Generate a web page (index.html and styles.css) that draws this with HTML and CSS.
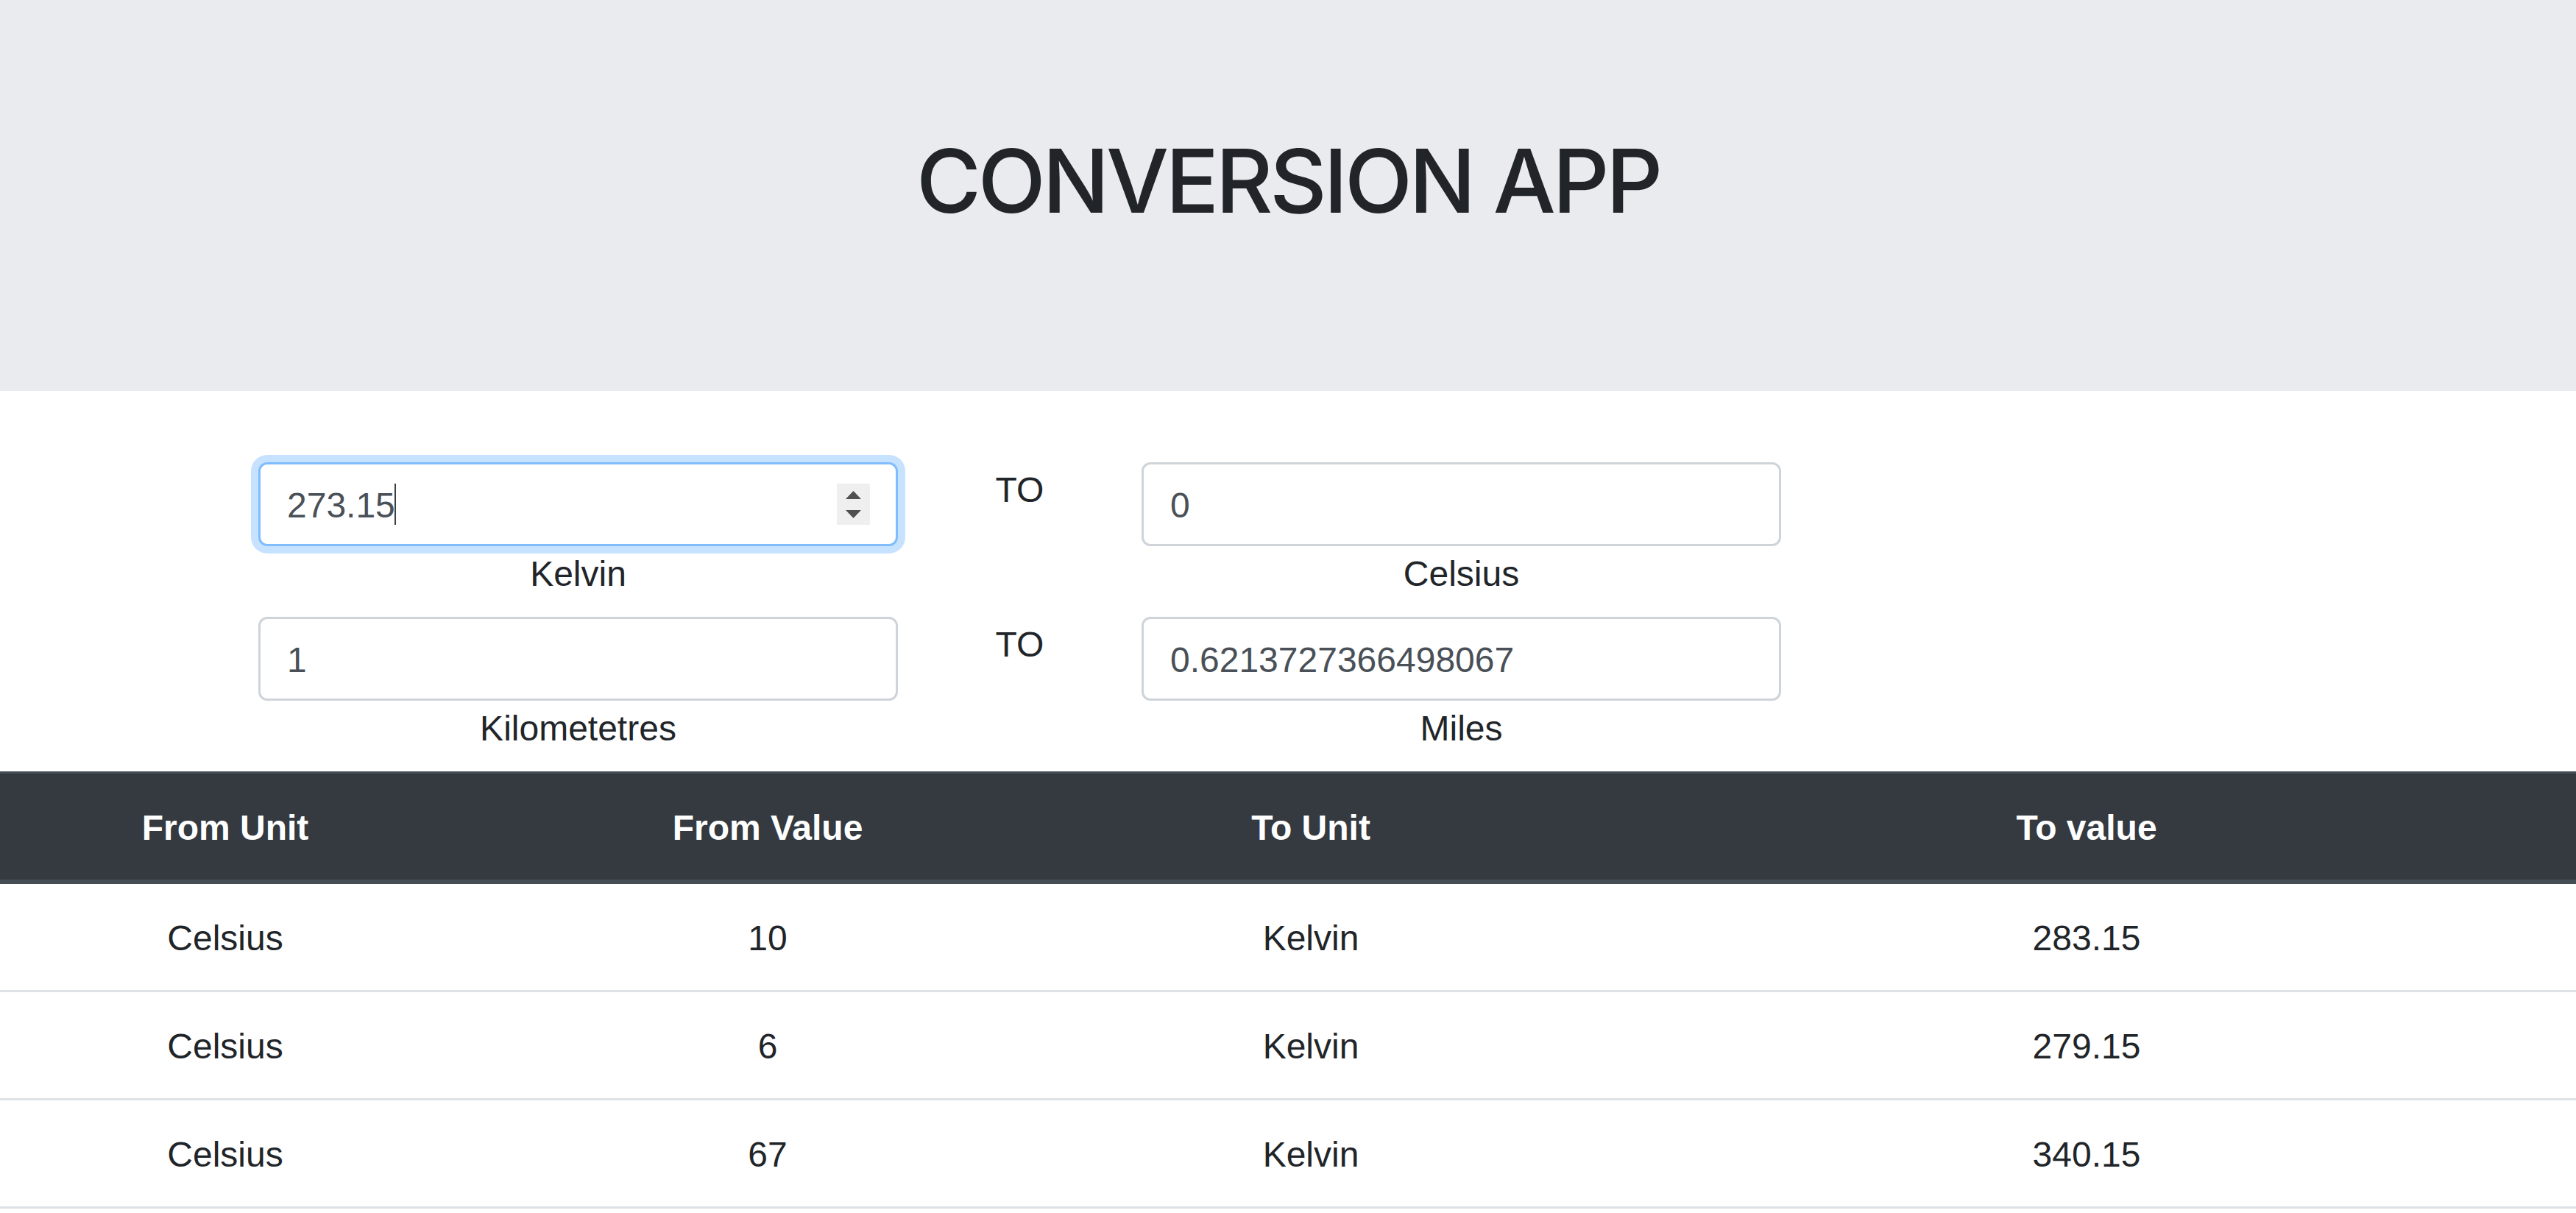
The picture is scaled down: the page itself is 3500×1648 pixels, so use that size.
FILE: index.html
```html
<!DOCTYPE html>
<html lang="en">
<head>
<meta charset="utf-8">
<title>Conversion App</title>
<link rel="stylesheet" href="styles.css">
</head>
<body>
<header class="jumbotron">
  <h1 class="title">CONVERSION APP</h1>
</header>

<main class="converter">
  <div class="conv-row">
    <div class="field-group">
      <div class="field is-focus">
        <input class="form-control focused" type="text" value="273.15">
        <span class="caret"></span>
        <span class="spinner">
          <svg width="45" height="56" viewBox="0 0 45 56"><polygon points="12,21 33,21 22.5,10" fill="#505050"/><polygon points="12,36 33,36 22.5,47" fill="#505050"/></svg>
        </span>
      </div>
      <label class="unit-label">Kelvin</label>
    </div>
    <div class="to">TO</div>
    <div class="field-group">
      <div class="field"><input class="form-control" type="text" value="0"></div>
      <label class="unit-label">Celsius</label>
    </div>
  </div>
  <div class="conv-row">
    <div class="field-group">
      <div class="field"><input class="form-control" type="text" value="1"></div>
      <label class="unit-label">Kilometetres</label>
    </div>
    <div class="to">TO</div>
    <div class="field-group">
      <div class="field"><input class="form-control" type="text" value="0.6213727366498067"></div>
      <label class="unit-label">Miles</label>
    </div>
  </div>
</main>

<table class="history">
  <colgroup>
    <col class="c1"><col class="c2"><col class="c3"><col class="c4">
  </colgroup>
  <thead>
    <tr><th>From Unit</th><th>From Value</th><th>To Unit</th><th class="last">To value</th></tr>
  </thead>
  <tbody>
    <tr><td>Celsius</td><td>10</td><td>Kelvin</td><td class="last">283.15</td></tr>
    <tr><td>Celsius</td><td>6</td><td>Kelvin</td><td class="last">279.15</td></tr>
    <tr><td>Celsius</td><td>67</td><td>Kelvin</td><td class="last">340.15</td></tr>
  </tbody>
</table>
</body>
</html>
```
FILE: styles.css
```css
* { box-sizing: border-box; }
html, body { margin: 0; padding: 0; }
body {
  font-family: "Liberation Sans", Arial, sans-serif;
  font-size: 48px;
  line-height: 72px;
  color: #212529;
  background: #fff;
}

.jumbotron {
  background: #eaebef;
  height: 531px;
  padding-top: 174px;
  margin-bottom: 97px;
  text-align: center;
}
.title {
  margin: 0;
  font-family: Inter, "Liberation Sans", sans-serif;
  font-weight: 500;
  font-size: 120px;
  line-height: 144px;
  letter-spacing: -4.3px;
  color: #212529;
}

.converter { padding-left: 351px; }
.conv-row { display: flex; align-items: flex-start; }
.field-group { width: 869px; display: flex; flex-direction: column; }
.field { position: relative; }
.form-control {
  display: block;
  width: 100%;
  height: 114px;
  padding: 19px 36px 17px;
  font-family: "Liberation Sans", Arial, sans-serif;
  font-size: 48px;
  line-height: 72px;
  color: #495057;
  background: #fff;
  border: 3px solid #ced4da;
  border-radius: 12px;
  outline: none;
}
.form-control.focused {
  border-color: #80bdff;
  box-shadow: 0 0 0 10px rgba(0, 123, 255, 0.22);
}
.caret {
  position: absolute;
  left: 185px;
  top: 29px;
  width: 2px;
  height: 56px;
  background: #3a3f44;
}
.spinner {
  position: absolute;
  right: 38px;
  top: 29px;
  width: 45px;
  height: 56px;
  background: #efefef;
  display: flex;
}
.unit-label {
  display: block;
  text-align: center;
  padding-top: 2px;
  margin-bottom: 22px;
}
.to {
  width: 331px;
  padding-top: 2px;
  text-align: center;
}

.history {
  width: 100%;
  border-collapse: collapse;
  table-layout: fixed;
}
.c1 { width: 612px; }
.c2 { width: 862px; }
.c3 { width: 614px; }
.history th, .history td {
  padding: 38px 36px 34px;
  text-align: center;
  line-height: 72px;
  vertical-align: top;
}
.history th {
  background: #343a40;
  color: #fff;
  font-weight: 700;
  border-top: 3px solid #454d55;
  border-bottom: 6px solid #454d55;
}
.history td {
  border-top: 3px solid #dee2e6;
  border-bottom: 3px solid #dee2e6;
}
.history .last { padding-left: 118px; }
```
